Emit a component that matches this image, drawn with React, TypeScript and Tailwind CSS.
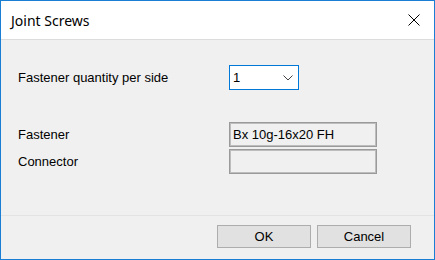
import React from "react";

export default function App() {
  const label = "text-[13px] text-black leading-none";
  return (
    <div
      className="w-[435px] h-[260px] flex flex-col border border-[#1a7fd4] bg-[#f0f0f0] overflow-hidden"
      style={{ fontFamily: '"Liberation Sans", Arial, sans-serif' }}
    >
      {/* Title bar */}
      <div className="h-[38px] bg-white flex items-center justify-between pl-[10px] pr-[13px] shrink-0">
        <span
          className="text-[14px] text-black"
          style={{ fontFamily: '"Segoe UI", "Noto Sans", "Open Sans", sans-serif' }}
        >
          Joint Screws
        </span>
        <svg width="12" height="12" viewBox="0 0 12 12" className="mr-[1px]">
          <path d="M0.5 0.5 L11.5 11.5 M11.5 0.5 L0.5 11.5" stroke="#000" strokeWidth="1" fill="none" />
        </svg>
      </div>
      <div className="h-px bg-[#dcdcdc] shrink-0" />

      {/* Body */}
      <div className="flex-1 flex flex-col pl-[17px] pt-[25px]">
        <div className="flex items-center h-[25px]">
          <div className={`${label} w-[211px]`}>Fastener quantity per side</div>
          <div className="w-[70px] h-[25px] bg-white border border-[#0078d7] flex items-center justify-between pl-[3px] pr-[5px]">
            <span className="text-[13px] text-black">1</span>
            <svg width="10" height="6" viewBox="0 0 10 6">
              <path d="M0.5 0.5 L5 5 L9.5 0.5" stroke="#444" strokeWidth="1" fill="none" />
            </svg>
          </div>
        </div>

        <div className="flex items-center h-[25px] mt-[32px]">
          <div className={`${label} w-[211px]`}>Fastener</div>
          <div className="w-[148px] h-[25px] border border-[#9a9a9a] shadow-[inset_1px_1px_0_#bdbdbd,inset_-1px_-1px_0_#bdbdbd] flex items-center pl-[3px]">
            <span className="text-[13px] text-black">Bx 10g-16x20 FH</span>
          </div>
        </div>

        <div className="flex items-center h-[25px] mt-[2px]">
          <div className={`${label} w-[211px]`}>Connector</div>
          <div className="w-[148px] h-[25px] border border-[#9a9a9a] shadow-[inset_1px_1px_0_#bdbdbd,inset_-1px_-1px_0_#bdbdbd]" />
        </div>
      </div>

      {/* Footer */}
      <div className="h-px bg-[#e3e3e3] shrink-0" />
      <div className="h-[43px] shrink-0 flex justify-end items-start pt-[9px] pr-[23px] gap-[6px]">
        <button className="w-[94px] h-[23px] bg-[#e1e1e1] border border-[#adadad] text-[13px] text-black flex items-center justify-center">
          OK
        </button>
        <button className="w-[94px] h-[23px] bg-[#e1e1e1] border border-[#adadad] text-[13px] text-black flex items-center justify-center">
          Cancel
        </button>
      </div>
    </div>
  );
}
